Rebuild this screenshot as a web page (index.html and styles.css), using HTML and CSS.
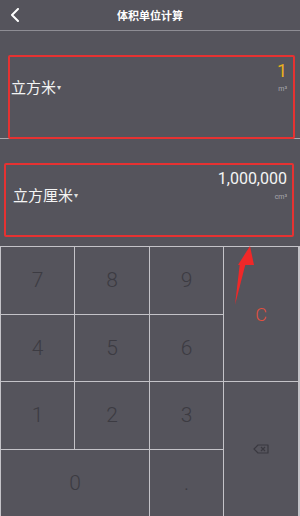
FILE: index.html
```html
<!DOCTYPE html>
<html lang="zh">
<head>
    <meta charset="UTF-8">
    <meta name="viewport" content="width=device-width, initial-scale=1.0">
    <title>体积单位计算</title>
    <link rel="stylesheet" href="styles.css">
</head>
<body>
    <div class="page">
        <div class="header">
            <svg class="back" width="10" height="14" viewBox="0 0 10 14">
                <path d="M8 1 L2 7 L8 13" fill="none" stroke="#fff" stroke-width="2" stroke-linecap="round" stroke-linejoin="round"/>
            </svg>
            <span class="title">体积单位计算</span>
        </div>

        <!-- 上面的单位 -->
        <div class="panel first">
            <div class="box box-top">
                <span class="unit-name">立方米<i class="caret">▾</i></span>
                <div class="result">
                    <span class="num active">1</span>
                    <span class="sym">m³</span>
                </div>
            </div>
        </div>

        <!-- 下面的单位 -->
        <div class="panel second">
            <div class="box box-bottom">
                <span class="unit-name">立方厘米<i class="caret">▾</i></span>
                <div class="result">
                    <span class="num">1,000,000</span>
                    <span class="sym">cm³</span>
                </div>
            </div>
        </div>

        <div class="keypad">
            <button class="key">7</button>
            <button class="key">8</button>
            <button class="key">9</button>
            <button class="key clear">C</button>
            <button class="key">4</button>
            <button class="key">5</button>
            <button class="key">6</button>
            <button class="key">1</button>
            <button class="key">2</button>
            <button class="key">3</button>
            <button class="key del">
                <svg width="16" height="10" viewBox="0 0 16 10">
                    <path d="M5 1 H15 V9 H5 L1 5 Z" fill="none" stroke="#3a3940" stroke-width="1.2" stroke-linejoin="round"/>
                    <path d="M8 3 L12 7 M12 3 L8 7" stroke="#3a3940" stroke-width="1.2"/>
                </svg>
            </button>
            <button class="key zero">0</button>
            <button class="key">.</button>
        </div>

        <!-- 标注箭头 -->
        <svg class="arrow" width="30" height="70" viewBox="0 0 30 70">
            <path d="M7 61 L12 18 L18 18 Z" fill="#f02828"/>
            <path d="M22 2 L10 21 L26 21 Z" fill="#f02828"/>
        </svg>
    </div>
</body>
</html>
```

FILE: styles.css
```css
*{
    margin:0;
    padding:0;
    box-sizing: border-box;
}
body{
    background-color: #55545c;
    font-family: Roboto, "Noto Sans CJK SC", sans-serif;
}
.page{
    position: relative;
    width: 300px;
    height: 516px;
    overflow: hidden;
}
.header{
    height: 31px;
    display: flex;
    align-items: center;
    justify-content: center;
    border-bottom: 1px solid #8e8d94;
    position: relative;
}
.back{
    position: absolute;
    left: 10px;
    top: 8px;
}
.title{
    color: #fff;
    font-size: 11px;
    font-weight: bold;
}
.panel{
    border-bottom: 1px solid #a9a8ae;
}
.first{
    height: 108px;
    padding: 24px 5px 0 8px;
}
.second{
    height: 107px;
    padding: 24px 6px 0 4px;
    border-bottom: none;
}
.box{
    border: 2px solid #e63232;
    border-radius: 2px;
    display: flex;
    justify-content: space-between;
    align-items: flex-start;
}
.box-top{
    height: 84px;
    padding: 4px 6px 0 1px;
}
.box-bottom{
    height: 74px;
    padding: 4px 5px 0 7px;
}
.unit-name{
    color: #f4f4f4;
    font-size: 15px;
    margin-top: 15px;
}
.caret{
    font-style: normal;
    font-size: 8px;
    color: #ddd;
    vertical-align: 3px;
    margin-left: 1px;
}
.result{
    display: flex;
    flex-direction: column;
    align-items: flex-end;
}
.num{
    color: #f4f4f4;
    font-size: 16px;
    line-height: 20px;
}
.num.active{
    color: #e9b11c;
    font-size: 18px;
}
.sym{
    color: #a8a7ad;
    font-size: 7px;
    margin-top: 4px;
}
.keypad{
    height: 271px;
    display: grid;
    grid-template-columns: 73px 74px 73px 74px;
    grid-template-rows: repeat(4, 1fr);
    gap: 1px;
    padding: 1px 2px 1px 1px;
    background-color: #c4c3c8;
}
.key{
    background-color: #55545c;
    border: none;
    color: #3c3b42;
    font-family: Roboto, sans-serif;
    font-weight: 300;
    font-size: 21px;
    display: flex;
    align-items: center;
    justify-content: center;
}
.key:active{
    background-color: #66656d;
}
.clear{
    grid-column: 4;
    grid-row: 1 / 3;
    color: #e2503e;
    font-size: 18px;
}
.del{
    grid-column: 4;
    grid-row: 3 / 5;
}
.zero{
    grid-column: 1 / 3;
}
.arrow{
    position: absolute;
    left: 228px;
    top: 244px;
}
```
